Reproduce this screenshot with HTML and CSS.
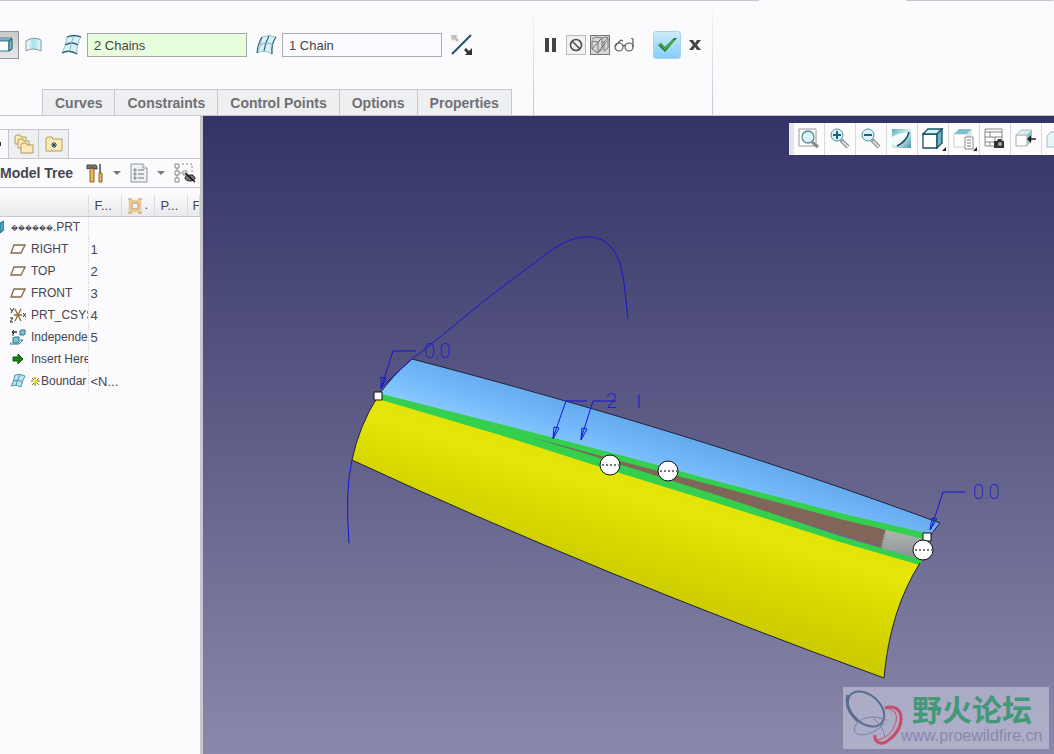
FILE: index.html
```html
<!DOCTYPE html>
<html lang="en">
<head>
    <meta charset="UTF-8">
    <meta name="viewport" content="width=device-width, initial-scale=1.0">
    <title>Boundary Blend</title>
    <link rel="stylesheet" href="styles.css">
</head>
<body>
    <!-- Dashboard -->
    <header class="ribbon">
        <div class="dashboard">
            <div class="dashboard__controls">
                <button class="mode mode--active" aria-label="Solid">
                    <svg width="18" height="26" viewBox="0 0 18 26"><path d="M-2 9h11v10h-11z" fill="#fff" stroke="#2b7f92"/><path d="M9 9l3-2v10l-3 2z" fill="#7fc3d2" stroke="#14505f"/><path d="M-2 8l2-2h12l-3 2h-11z" fill="#b6e4ee" stroke="#14505f" stroke-width=".7"/></svg>
                </button>
                <button class="mode" aria-label="Surface">
                    <svg width="18" height="16" viewBox="0 0 18 16"><defs><linearGradient id="sheet"><stop offset="0" stop-color="#fff"/><stop offset=".5" stop-color="#a6e0ef"/><stop offset="1" stop-color="#e4f7fb"/></linearGradient></defs><path d="M1 4Q8 -1 16 3V14Q8 10 1 14z" fill="url(#sheet)" stroke="#8b9499"/></svg>
                </button>
                <label class="collector">
                    <svg width="22" height="22" viewBox="0 0 22 22"><path d="M6 3Q13 0 20 3Q15 10 16 20Q8 15 1 19Q5 12 6 3z" fill="#d6f2f8" stroke="#8fa9b1" stroke-width=".8"/><path d="M6 3Q13 0 20 3M4 11Q11 7 17 11M1 19Q8 15 16 20" fill="none" stroke="#2b6676" stroke-width="1.3"/><path d="M13 2Q9 9 9 17" fill="none" stroke="#9ab2b9"/></svg>
                    <input class="collector__input collector__input--active" type="text" value="2 Chains" aria-label="First direction">
                </label>
                <label class="collector">
                    <svg width="22" height="22" viewBox="0 0 22 22"><path d="M6 3Q13 0 20 3Q15 10 16 20Q8 15 1 19Q5 12 6 3z" fill="#d6f2f8" stroke="#8fa9b1" stroke-width=".8"/><path d="M6 3Q2 9 1 19M13 2Q9 9 8 17M20 3Q15 10 16 20" fill="none" stroke="#2b6676" stroke-width="1.2"/><path d="M4 11Q11 7 17 11" fill="none" stroke="#7fabb7"/></svg>
                    <input class="collector__input" type="text" value="1 Chain" aria-label="Second direction">
                </label>
                <button class="flip" aria-label="Flip">
                    <svg width="22" height="22" viewBox="0 0 22 22"><path d="M1 20L20 1" stroke="#1e5266" stroke-width="2"/><path d="M0 1h7l-2 2 3 3-2 2-3-3-2 2z" fill="#c1bdb9"/><path d="M21 21h-7l2-2-3-3 2-2 3 3 3-3z" fill="#333"/></svg>
                </button>
            </div>
            <nav class="tabs">
                <button class="tabs__item">Curves</button>
                <button class="tabs__item">Constraints</button>
                <button class="tabs__item">Control Points</button>
                <button class="tabs__item">Options</button>
                <button class="tabs__item">Properties</button>
            </nav>
        </div>
        <div class="actions">
            <button class="action" aria-label="Pause">
                <svg width="12" height="14" viewBox="0 0 12 14"><path d="M0 0h4v14h-4zM7 0h4v14h-4z" fill="#444"/></svg>
            </button>
            <button class="action action--framed" aria-label="No preview">
                <svg width="18" height="18" viewBox="0 0 18 18"><circle cx="9" cy="9" r="5.5" fill="none" stroke="#4b4b4b" stroke-width="1.6"/><path d="M5 5l8 8" stroke="#4b4b4b" stroke-width="1.6"/></svg>
            </button>
            <button class="action action--pressed" aria-label="Attached preview">
                <svg width="18" height="18" viewBox="0 0 18 18" fill="none" stroke="#666" stroke-width=".8"><path d="M1 3l4-2 6 1-4 4-6-1v8l6 4V6M7 17l4-4V2l5-1 1 1-4 4v9l4-3V2M11 6h2M1 13l9-10M8 15l8-10"/></svg>
            </button>
            <button class="action" aria-label="Verify">
                <svg width="22" height="14" viewBox="0 0 22 14" fill="none" stroke="#5a5a5a" stroke-width="1.2"><circle cx="5" cy="9" r="4"/><circle cx="15" cy="9" r="4"/><path d="M9 8q1-2 2 0M1 8l6-6 2 1M19 9V1l-2-1"/></svg>
            </button>
            <button class="action action--ok" aria-label="OK">
                <svg width="20" height="16" viewBox="0 0 20 16"><path d="M1 8l3-2 4 4L17 1l3 0L8 15z" fill="#1d7a2b"/><path d="M2 8l2-1 4 5 9-9" fill="none" stroke="#4fb747" stroke-width="1.5"/></svg>
            </button>
            <button class="action action--cancel" aria-label="Cancel">
                <svg width="12" height="10" viewBox="0 0 12 10"><path d="M0 0h4l2 3 2-3h4L8 5l4 5H8L6 7l-2 3H0l4-5z" fill="#444"/></svg>
            </button>
        </div>
    </header>

    <main class="workspace">
        <!-- Model tree -->
        <aside class="sidebar">
            <div class="sidebar__tabs">
                <button class="sidebar__tab sidebar__tab--active" aria-label="Model Tree">
                    <svg width="3" height="6" viewBox="0 0 3 6"><path d="M0 1h1v4h-1z" fill="#333"/></svg>
                </button>
                <button class="sidebar__tab" aria-label="Folder Browser">
                    <svg width="20" height="20" viewBox="0 0 20 20" fill="#fbeab5" stroke="#b09a68"><path d="M1 3q0-2 2-2h3l1 2h5v7H1z"/><path d="M4 7q0-2 2-2h3l1 2h5v7H4z"/><path d="M7 11q0-2 2-2h3l1 2h6v8H7z"/></svg>
                </button>
                <button class="sidebar__tab" aria-label="Favorites">
                    <svg width="18" height="16" viewBox="0 0 18 16"><path d="M1 3q0-2 2-2h4l1 2h9v12H1z" fill="#fbeab5" stroke="#b89b61"/><path d="M9 6v6M6 9h6M7 7l4 4M11 7l-4 4" stroke="#17455c"/></svg>
                </button>
            </div>
            <div class="sidebar__title">
                <h2>Model Tree</h2>
                <button class="tool" aria-label="Settings">
                    <svg width="18" height="20" viewBox="0 0 18 20"><path d="M4 5h4v14H4z" fill="#e5b85f" stroke="#8b642c"/><path d="M1 2h9l1 2v2H9L8 5H4L1 6z" fill="#777" stroke="#444"/><path d="M14 1v10" stroke="#777" stroke-width="2"/><path d="M13 10h3v9h-3z" fill="#e5b85f" stroke="#8b642c"/></svg>
                    <span class="caret"></span>
                </button>
                <button class="tool" aria-label="Show">
                    <svg width="18" height="20" viewBox="0 0 18 20"><path d="M1 1h12l4 4v14H1z" fill="#eef2f5" stroke="#8b969d"/><path d="M13 1v4h4" fill="#fff" stroke="#8b969d"/><path d="M8 7h6M8 11h6M8 15h6" stroke="#68747d"/><path d="M4 6h2v2H4zM4 10h2v2H4zM4 14h2v2H4z" fill="none" stroke="#68747d" stroke-width=".8"/></svg>
                    <span class="caret"></span>
                </button>
                <button class="tool" aria-label="Tree filter">
                    <svg width="22" height="20" viewBox="0 0 22 20" fill="none" stroke="#888"><path d="M1 1h4v4H1zM1 8h4v4H1zM1 15h4v4H1zM3 5v3M3 12v3M5 10h3M9 8h4v4H9z"/><path d="M8 1h10v12" stroke-dasharray="2 2"/><ellipse cx="16" cy="15" rx="5" ry="3" fill="#777" stroke="#222"/><path d="M11 10l10 9" stroke="#111" stroke-width="1.5"/></svg>
                </button>
            </div>
            <table class="tree">
                <colgroup>
                    <col class="tree__name">
                    <col class="tree__col">
                    <col class="tree__col">
                    <col class="tree__col">
                    <col>
                </colgroup>
                <thead>
                    <tr>
                        <th></th>
                        <th>F...</th>
                        <th><svg width="14" height="16" viewBox="0 0 14 16" fill="none"><path d="M2 3h10v10H2z" stroke="#ecc88c" stroke-width="2.5"/><path d="M4 5h6v6H4zM0 1h4M10 1h4M0 15h4M10 15h4" stroke="#a57a3c" stroke-width=".8"/></svg>.</th>
                        <th>P...</th>
                        <th>F</th>
                    </tr>
                </thead>
                <tbody>
                    <tr class="tree__root">
                        <td><span><svg width="4" height="14" viewBox="0 0 4 14"><path d="M0 3l4-2v9l-4 3z" fill="#46a8cb" stroke="#176b8c"/></svg><span class="tree__lost">&#65533;&#65533;&#65533;&#65533;&#65533;&#65533;</span>.PRT</span></td>
                        <td></td><td></td><td></td><td></td>
                    </tr>
                    <tr>
                        <td><span><svg width="16" height="16" viewBox="0 0 16 16"><path d="M4 4h11l-4 8H1z" fill="#fff" stroke="#846a48" stroke-width="1.3"/></svg>RIGHT</span></td>
                        <td>1</td><td></td><td></td><td></td>
                    </tr>
                    <tr>
                        <td><span><svg width="16" height="16" viewBox="0 0 16 16"><path d="M4 4h11l-4 8H1z" fill="#fff" stroke="#846a48" stroke-width="1.3"/></svg>TOP</span></td>
                        <td>2</td><td></td><td></td><td></td>
                    </tr>
                    <tr>
                        <td><span><svg width="16" height="16" viewBox="0 0 16 16"><path d="M4 4h11l-4 8H1z" fill="#fff" stroke="#846a48" stroke-width="1.3"/></svg>FRONT</span></td>
                        <td>3</td><td></td><td></td><td></td>
                    </tr>
                    <tr>
                        <td><span><svg width="16" height="16" viewBox="0 0 16 16" fill="none"><path d="M4 8h8M5 2l6 12M11 2L5 14" stroke="#8d6d35" stroke-width="1.3"/><path d="M0 1l2 3M4 1L1 6M0 11h3l-3 4h3M13 6l3 4M16 6l-3 4" stroke="#333"/></svg>PRT_CSYS</span></td>
                        <td>4</td><td></td><td></td><td></td>
                    </tr>
                    <tr>
                        <td><span><svg width="16" height="16" viewBox="0 0 16 16"><path d="M10 2l1-1h4v4l-1 1h-4z" fill="#79c4dc" stroke="#2c7088"/><path d="M3 9l2-1h4v5l-2 1H3z" fill="#79c4dc" stroke="#2c7088"/><path d="M0 13v2h9l4-4h-3" fill="none" stroke="#267493"/><path d="M3 7V3h4M2 3h5M4 1L2 3l2 2" fill="none" stroke="#333"/></svg>Independe</span></td>
                        <td>5</td><td></td><td></td><td></td>
                    </tr>
                    <tr>
                        <td><span><svg width="16" height="16" viewBox="0 0 16 16"><path d="M3 6h5V3l5 5-5 5v-3H3z" fill="#13860f" stroke="#07590a"/></svg>Insert Here</span></td>
                        <td></td><td></td><td></td><td></td>
                    </tr>
                    <tr>
                        <td><span><svg width="16" height="16" viewBox="0 0 16 16"><path d="M5 2Q10 0 15 3Q12 8 11 14Q6 11 1 13Q4 8 5 2z" fill="#b6e4f1" stroke="#5893a6"/><path d="M3 8q5-2 10 1M10 2q-3 5-4 10" fill="none" stroke="#5893a6"/></svg><svg class="tree__new" width="9" height="9" viewBox="0 0 9 9"><path d="M4 0v9M0 4h9M1 1l7 7M8 1L1 8" stroke="#77711c"/><circle cx="4" cy="4" r="2" fill="#ffef2e"/></svg>Boundar</span></td>
                        <td>&lt;N...</td><td></td><td></td><td></td>
                    </tr>
                </tbody>
            </table>
        </aside>

        <!-- Graphics area -->
        <section class="viewport">
            <svg class="scene" viewBox="203 116 851 638" preserveAspectRatio="xMinYMin meet">
                <defs>
                    <linearGradient id="yellow" gradientUnits="userSpaceOnUse" x1="645" y1="475" x2="611" y2="585">
                        <stop offset="0" stop-color="#e2e208"/>
                        <stop offset=".2" stop-color="#e6e608"/>
                        <stop offset=".6" stop-color="#d8d800"/>
                        <stop offset="1" stop-color="#cccc00"/>
                    </linearGradient>
                    <linearGradient id="blue" gradientUnits="userSpaceOnUse" x1="660" y1="426" x2="643" y2="480">
                        <stop offset="0" stop-color="#62a8ec"/>
                        <stop offset=".5" stop-color="#72b8fa"/>
                        <stop offset="1" stop-color="#8ccdff"/>
                    </linearGradient>
                    <linearGradient id="end" x1="0" y1="0" x2="0" y2="1">
                        <stop offset="0" stop-color="#b0b9ae"/>
                        <stop offset="1" stop-color="#888c99"/>
                    </linearGradient>
                </defs>

                <path d="M378 396Q392 376 412 359C588 405 764 458 940 523L928 538Z" fill="url(#blue)"/>
                <path d="M378 396Q359 426 352 460Q600 575 884 678Q890 610 920 563Z" fill="url(#yellow)"/>
                <path d="M378 396L500 430L600 455L720 484L886 529L884 548L720 498L600 460Z" fill="#806558"/>
                <path d="M886 529L928 538L920 562L882 549Z" fill="url(#end)"/>
                <path d="M886 529v4l-2 2v3l-1 2v3l-1 2v3" fill="none" stroke="#bbb" stroke-dasharray="2 1"/>

                <!-- chains -->
                <path d="M378 393L500 424L620 455L720 482L840 513L930 534L928 540L840 519L720 487L620 461L530 437L600 458L720 496L840 536L922 560L920 565L840 542L720 504L610 470L500 435L378 399Z" fill="#33cf4d"/>

                <path class="edge" d="M412 359C588 405 764 458 940 523L928 538M378 396Q392 376 412 359M378 396Q359 426 352 460Q600 575 884 678Q890 610 920 563"/>
                <path class="curve" d="M412 359C444 335 470 311 506 284C530 267 543 255 560 245C577 235 598 233 610 246C624 261 624 285 628 319"/>
                <path class="curve" d="M352 460Q345 490 349 543M381 388Q394 375 412 359"/>

                <g class="leader">
                    <path d="M416 351H393L381 388M381 377l5 1-5 11z"/>
                    <path d="M587 401H566L553 438M554 427l5 1-6 11z"/>
                    <path d="M616 401H593L581 439M582 428l5 1-6 11z"/>
                    <path d="M965 492H943L931 529M932 518l5 1-7 11z"/>
                </g>
                <g class="dimension">
                    <text x="424" y="358">0.0</text>
                    <text x="606" y="408">2</text>
                    <path d="M639 395V408"/>
                    <text x="973" y="499">0.0</text>
                </g>

                <g class="handle">
                    <path d="M374 392h8v8h-8zM923 533h8v8h-8z"/>
                    <circle cx="610" cy="465" r="10"/>
                    <circle cx="668" cy="471" r="10"/>
                    <circle cx="923" cy="550" r="10"/>
                </g>
                <path class="handle__dots" d="M602 465h17M660 471h17M915 550h17"/>
            </svg>

            <div class="viewbar">
                <button class="viewbar__item" aria-label="Refit">
                    <svg width="22" height="22" viewBox="0 0 22 22"><path d="M1 1h17v17H1z" fill="#fff" stroke="#999"/><circle cx="10" cy="9" r="6" fill="#d9f3f9" stroke="#568b9b" stroke-width="1.3"/><path d="M14 14l6 5" stroke="#888" stroke-width="3"/></svg>
                </button>
                <button class="viewbar__item" aria-label="Zoom In">
                    <svg width="22" height="22" viewBox="0 0 22 22"><path d="M12 12l7 7" stroke="#888" stroke-width="4"/><path d="M13 13l6 6" stroke="#ddd" stroke-width="2"/><circle cx="8" cy="7" r="6" fill="#d9f3f9" stroke="#568b9b"/><path d="M4 7h8M8 3v8" stroke="#18657a" stroke-width="2"/></svg>
                </button>
                <button class="viewbar__item" aria-label="Zoom Out">
                    <svg width="22" height="22" viewBox="0 0 22 22"><path d="M12 12l7 7" stroke="#888" stroke-width="4"/><path d="M13 13l6 6" stroke="#ddd" stroke-width="2"/><circle cx="8" cy="7" r="6" fill="#d9f3f9" stroke="#568b9b"/><path d="M4 7h8" stroke="#18657a" stroke-width="2"/></svg>
                </button>
                <button class="viewbar__item" aria-label="Repaint">
                    <svg width="22" height="22" viewBox="0 0 22 22"><defs><linearGradient id="paint" x2="1" y2="1"><stop offset="0" stop-color="#62abb9"/><stop offset=".5" stop-color="#d5eef2"/><stop offset="1" stop-color="#4d92a8"/></linearGradient></defs><path d="M1 1h19v19H1z" fill="url(#paint)"/><path d="M1 9Q9 4 18 5Q16 13 6 18L1 16z" fill="#f4fbfc"/><path d="M18 4Q16 13 6 18" fill="none" stroke="#174c64" stroke-width="1.5"/></svg>
                </button>
                <button class="viewbar__item" aria-label="Display Style">
                    <svg width="22" height="22" viewBox="0 0 22 22" stroke="#175164" stroke-width="1.3"><path d="M1 6h14v14H1z" fill="#fff"/><path d="M1 6l5-5h14l-5 5z" fill="#d2f2f7"/><path d="M15 6l5-5v14l-5 5z" fill="#70b5c4"/></svg>
                    <span class="corner"></span>
                </button>
                <button class="viewbar__item" aria-label="Saved Orientations">
                    <svg width="22" height="22" viewBox="0 0 22 22"><path d="M1 6h13v13H1z" fill="#fff" stroke="#ccc"/><path d="M1 6l5-5h13l-5 5z" fill="#7fc0ce"/><path d="M14 6l5-5v12h-5z" fill="#d7e9ed"/><path d="M12 9h8v12h-8z" fill="#fff" stroke="#888"/><path d="M14 12h4M14 15h4M14 18h4" stroke="#777"/></svg>
                    <span class="corner"></span>
                </button>
                <button class="viewbar__item" aria-label="View Manager">
                    <svg width="22" height="22" viewBox="0 0 22 22"><path d="M1 1h17v17H1zM1 4h17M1 9h17M1 14h17M6 4v5M11 9v5M6 14v4" fill="none" stroke="#888"/><path d="M10 13h3l1-2h3l1 2h2v7H10z" fill="#333"/><circle cx="16" cy="16" r="2" fill="#aaa"/></svg>
                </button>
                <button class="viewbar__item" aria-label="Annotation Display">
                    <svg width="22" height="22" viewBox="0 0 22 22"><path d="M1 7h11v11H1z" fill="#fff" stroke="#aaa"/><path d="M1 7l5-5h11l-5 5z" fill="#d7f0f5" stroke="#bbb"/><path d="M12 7l5-5v11l-5 5z" fill="#8bc8d6"/><path d="M21 11h-6" stroke="#222" stroke-width="1.5"/><path d="M12 11l4-4v8z" fill="#222"/></svg>
                </button>
                <button class="viewbar__item" aria-label="Datum Display">
                    <svg width="22" height="22" viewBox="0 0 22 22"><path d="M1 8l4-4h14v15H1z" fill="#e4f6f9" stroke="#a4bdc3"/></svg>
                </button>
            </div>

            <div class="watermark">
                <svg width="58" height="56" viewBox="0 0 58 56" fill="none"><ellipse cx="21" cy="19" rx="21" ry="14" transform="rotate(42 21 19)" stroke="#5b6c91" stroke-width="2"/><path d="M3 5Q-1 19 13 31" stroke="#5b6c91" stroke-width="3"/><path d="M40 18C60 12 61 37 45 49C36 57 29 52 30 45" stroke="#c84d68" stroke-width="3"/><path d="M40 18Q54 19 51 32Q46 48 32 50" stroke="#c84d68"/><path d="M41 30Q24 23 13 32Q4 43 16 45Q28 45 40 33M29 29Q38 36 40 47" stroke="#7183a2"/></svg>
                <div class="watermark__text">
                    <strong>野火论坛</strong>
                    <span>www.proewildfire.cn</span>
                </div>
            </div>
        </section>
    </main>
</body>
</html>
```

FILE: styles.css
```css
:root {
	/* COLORS */
	--panel: #fbfbfd;
	--tab: #eeeff1;
	--line: #c6c6cc;
	--text: #45454d;
	--ink: #1515d8;
}

* {
	box-sizing: border-box;
}

body {
	background: var(--panel);
	color: var(--text);
	display: flex;
	flex-direction: column;
	font-family: "Liberation Sans", Arial, sans-serif;
	font-size: 13px;
	margin: 0;
	min-height: 100vh;
}

button {
	align-items: center;
	background: none;
	border: none;
	color: inherit;
	display: flex;
	flex-shrink: 0;
	font: inherit;
	justify-content: center;
	padding: 0;
}

svg {
	display: block;
	flex-shrink: 0;
}

/* Dashboard */
.ribbon {
	background: linear-gradient(var(--line), var(--line)) 0 0 / 72% 1px no-repeat,
		linear-gradient(var(--line), var(--line)) 100% 0 / 14% 1px no-repeat;
	border-bottom: 1px solid var(--line);
	display: flex;
	min-height: 116px;
}

.dashboard,
.actions {
	border-right: 1px solid;
	border-image: linear-gradient(transparent, var(--line)) 1;
}

.dashboard {
	display: flex;
	flex-direction: column;
	justify-content: space-between;
	padding-top: 31px;
	width: 534px;
}

.dashboard__controls {
	align-items: center;
	display: flex;
	height: 28px;
}

.mode {
	height: 28px;
	margin-right: 6px;
}

.mode + .collector {
	margin-left: 12px;
}

.mode--active {
	background: linear-gradient(#c8c9cc, #e6e7e9);
	border: 1px solid #929297;
	border-left: none;
	width: 19px;
}

.collector {
	align-items: center;
	display: flex;
	gap: 4px;
	margin-right: 9px;
}

.collector__input {
	background: #fafaff;
	border: 1px solid #adadb3;
	color: #444;
	font: inherit;
	height: 24px;
	padding: 0 6px;
	width: 160px;
}

.collector__input--active {
	background: #e8fddc;
	border-color: #a2a9a0;
}

.tabs {
	display: flex;
	padding-left: 42px;
}

.tabs__item {
	background: var(--tab);
	border: 1px solid var(--line);
	border-bottom: none;
	color: #707075;
	font-size: 14px;
	font-weight: bold;
	height: 26px;
	padding: 0 12px;
}

.tabs__item + .tabs__item {
	margin-left: -1px;
}

.actions {
	align-items: center;
	align-self: stretch;
	display: flex;
	padding: 0 11px 26px;
	width: 179px;
}

.action {
	margin-right: 4px;
}

.action--framed,
.action--pressed {
	border: 1px solid #bbb;
	height: 20px;
	width: 20px;
}

.action--framed {
	background: #f1f1f3;
	margin-left: 5px;
}

.action--pressed {
	background: #d6d6d6;
	border-color: #777;
}

.action--ok {
	background: linear-gradient(#cdebfc, #86cdf8);
	border: 1px solid #a5d4ef;
	border-radius: 3px;
	height: 28px;
	margin-left: 13px;
	margin-right: 8px;
	width: 28px;
}

/* Model tree */
.workspace {
	display: flex;
	flex: 1;
}

.sidebar {
	border-right: 3px solid var(--line);
	flex-shrink: 0;
	overflow: hidden;
	padding-top: 13px;
	width: 203px;
}

.sidebar__tabs {
	border-bottom: 1px solid var(--line);
	display: flex;
	height: 30px;
}

.sidebar__tab {
	background: var(--tab);
	border: 1px solid var(--line);
	border-bottom: none;
	border-left: none;
	width: 30px;
}

.sidebar__tab--active {
	background: none;
	justify-content: flex-start;
	width: 9px;
}

.sidebar__title {
	align-items: center;
	border-bottom: 1px solid var(--line);
	display: flex;
	gap: 9px;
	height: 29px;
}

.sidebar__title h2 {
	font-size: 14px;
	margin: 0 4px 0 0;
	white-space: nowrap;
}

.tool {
	gap: 9px;
}

.caret {
	border: 4px solid transparent;
	border-bottom: none;
	border-top-color: #777;
}

.tree {
	border-collapse: collapse;
	margin-top: 7px;
	table-layout: fixed;
	width: 200px;
}

.tree__name {
	width: 88px;
}

.tree__col {
	width: 33px;
}

.tree th {
	background: linear-gradient(var(--panel), #e9e9ec);
	border-bottom: 1px solid var(--line);
	border-right: 1px solid #dcdce0;
	font-weight: normal;
	height: 21px;
	overflow: hidden;
	padding: 0 0 0 6px;
	text-align: left;
	white-space: nowrap;
}

.tree th:last-child {
	padding-left: 5px;
}

.tree th svg {
	display: inline-block;
	margin-right: 3px;
	vertical-align: middle;
}

.tree td {
	height: 22px;
	overflow: hidden;
	padding: 0 0 0 2px;
	white-space: nowrap;
}

.tree td:first-child {
	border-right: 1px dotted #d8d8dd;
	font-size: 12px;
	padding-left: 10px;
}

.tree td > span {
	align-items: center;
	display: flex;
	gap: 5px;
}

.tree .tree__root td:first-child {
	padding-left: 0;
}

.tree__root td > span {
	gap: 0;
}

.tree__lost {
	font-size: 7px;
	margin-left: 7px;
}

.tree__new {
	margin-right: -4px;
}

/* Graphics area */
.viewport {
	background: linear-gradient(#333366, #8a88aa);
	flex: 1;
	min-width: 0;
	overflow: hidden;
	position: relative;
}

.scene {
	width: 100%;
}

.edge {
	fill: none;
	stroke: #222238;
}

.curve,
.leader,
.dimension path {
	fill: none;
	stroke: var(--ink);
}

.dimension text {
	fill: var(--ink);
	font-family: Roboto, "Liberation Sans", sans-serif;
	font-size: 20px;
	font-weight: 200;
}

.handle {
	fill: #fff;
	stroke: #111;
}

.handle__dots {
	stroke: #777;
	stroke-dasharray: 2 2;
	stroke-width: 2;
}

.viewbar {
	background: #fcfcfd;
	border-left: 5px solid #e4e5ec;
	display: flex;
	height: 32px;
	overflow: hidden;
	position: absolute;
	right: 0;
	top: 7px;
	width: 265px;
}

.viewbar__item {
	border-right: 1px solid #d8d8dd;
	height: 32px;
	position: relative;
	width: 31px;
}

.corner {
	border: 2px solid #222;
	border-left-color: transparent;
	border-top-color: transparent;
	bottom: 4px;
	position: absolute;
	right: 2px;
}

.watermark {
	align-items: center;
	background: rgba(225, 225, 240, 0.45);
	bottom: 5px;
	display: flex;
	height: 62px;
	padding-left: 2px;
	position: absolute;
	right: 5px;
	width: 206px;
}

.watermark__text {
	display: flex;
	flex-direction: column;
}

.watermark strong {
	color: #439878;
	font-family: "Noto Sans CJK SC", sans-serif;
	font-size: 30px;
	line-height: 36px;
	padding-left: 9px;
}

.watermark span {
	color: #8589ac;
	font-size: 16px;
	line-height: 20px;
	margin-left: -2px;
}
```
